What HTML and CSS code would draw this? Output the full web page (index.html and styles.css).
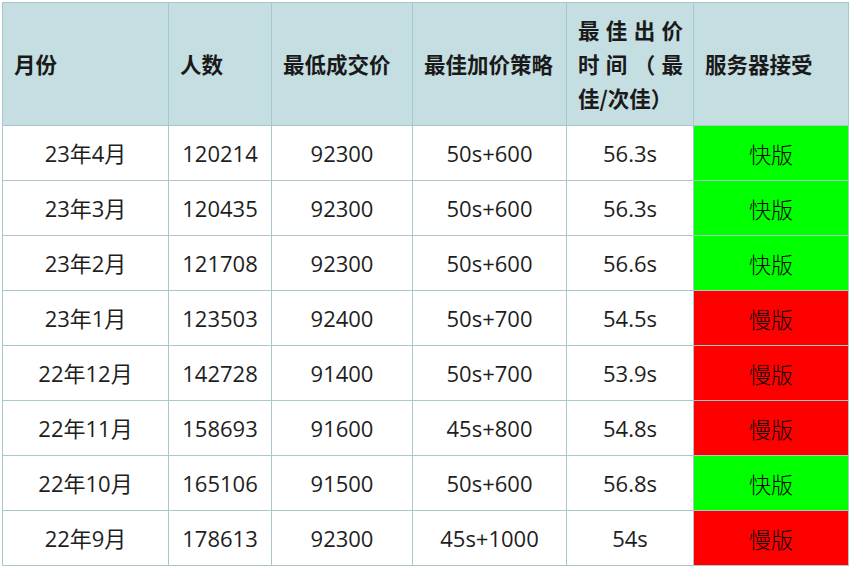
FILE: index.html
```html
<!DOCTYPE html>
<html lang="zh-CN">
<head>
<meta charset="utf-8">
<link rel="stylesheet" href="styles.css">
</head>
<body>
<table class="grid">
  <colgroup>
    <col class="c1"><col class="c2"><col class="c3"><col class="c4"><col class="c5"><col class="c6">
  </colgroup>
  <thead>
    <tr>
      <th>月份</th>
      <th>人数</th>
      <th>最低成交价</th>
      <th>最佳加价策略</th>
      <th>最佳出价时间（最佳/次佳）</th>
      <th>服务器接受</th>
    </tr>
  </thead>
  <tbody>
    <tr><td>23年4月</td><td>120214</td><td>92300</td><td>50s+600</td><td>56.3s</td><td class="fast">快版</td></tr>
    <tr><td>23年3月</td><td>120435</td><td>92300</td><td>50s+600</td><td>56.3s</td><td class="fast">快版</td></tr>
    <tr><td>23年2月</td><td>121708</td><td>92300</td><td>50s+600</td><td>56.6s</td><td class="fast">快版</td></tr>
    <tr><td>23年1月</td><td>123503</td><td>92400</td><td>50s+700</td><td>54.5s</td><td class="slow">慢版</td></tr>
    <tr><td>22年12月</td><td>142728</td><td>91400</td><td>50s+700</td><td>53.9s</td><td class="slow">慢版</td></tr>
    <tr><td>22年11月</td><td>158693</td><td>91600</td><td>45s+800</td><td>54.8s</td><td class="slow">慢版</td></tr>
    <tr><td>22年10月</td><td>165106</td><td>91500</td><td>50s+600</td><td>56.8s</td><td class="fast">快版</td></tr>
    <tr><td>22年9月</td><td>178613</td><td>92300</td><td>45s+1000</td><td>54s</td><td class="slow">慢版</td></tr>
  </tbody>
</table>
</body>
</html>
```
FILE: styles.css
```css
html, body {
  margin: 0;
  padding: 0;
  background: #ffffff;
}
body {
  padding: 2px;
  font-family: "Open Sans", "Noto Sans CJK SC", sans-serif;
  color: #1e1e1e;
}
.grid {
  border-collapse: collapse;
  table-layout: fixed;
  width: 846px;
}
.c1 { width: 166px; }
.c2 { width: 103px; }
.c3 { width: 141px; }
.c4 { width: 154px; }
.c5 { width: 127px; }
.c6 { width: 155px; }
.grid th, .grid td {
  border: 1px solid #a9c6cc;
}
.grid th {
  background: #c5dee2;
  height: 122px;
  padding: 0 10px 0 11px;
  font-family: "Noto Sans CJK SC", sans-serif;
  font-weight: 700;
  font-size: 21.5px;
  line-height: 34px;
  text-align: justify;
  text-align-last: left;
  color: #1a1a1a;
  vertical-align: middle;
}
.grid td {
  height: 54px;
  padding: 0;
  text-align: center;
  vertical-align: middle;
  font-size: 22px;
  line-height: 26px;
}
.grid td.fast,
.grid td.slow {
  color: #000;
  font-family: "Noto Sans CJK SC", sans-serif;
  font-weight: 300;
}
.grid td.fast { background: #00ff00; }
.grid td.slow { background: #ff0000; }
```
